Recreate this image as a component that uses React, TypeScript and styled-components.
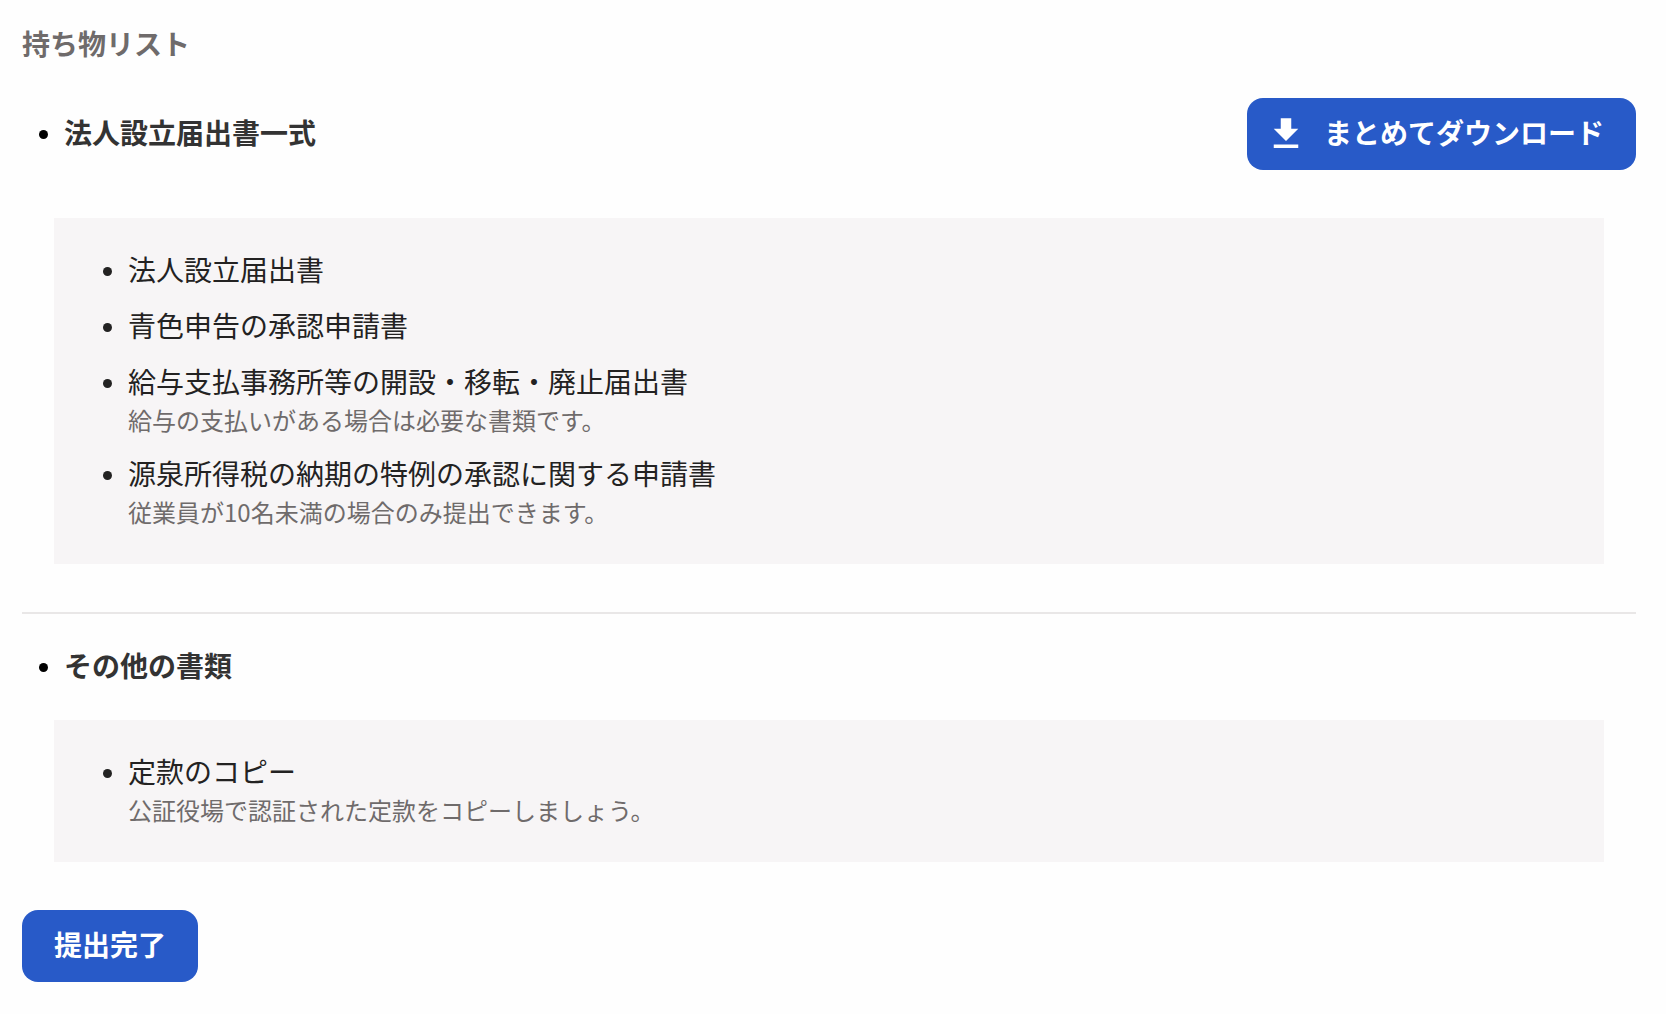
import React from 'react';
import styled, { createGlobalStyle } from 'styled-components';

const color = {
  primary: '#285ac8',
  text: '#232222',
  heading: '#333333',
  muted: '#6f6b6b',
  panel: '#f7f5f6',
  line: '#e9e7e7',
};

const GlobalStyle = createGlobalStyle`
  *, *::before, *::after {
    box-sizing: border-box;
  }
  body {
    margin: 0;
    background: #fefefe;
    color: ${color.text};
    font-family: "Noto Sans CJK JP", sans-serif;
    font-size: 28px;
    line-height: 38px;
  }
`;

const Page = styled.main`
  display: flex;
  flex-direction: column;
  padding: 24px 30px 32px 22px;
`;

const Title = styled.h1`
  margin: 0 0 32px;
  padding-bottom: 4px;
  color: ${color.muted};
  font-size: 28px;
  font-weight: 700;
`;

const Sections = styled.ul`
  margin: 0;
  padding: 0;
  list-style: none;
`;

const Section = styled.li`
  & + & {
    border-top: 2px solid ${color.line};
    padding-top: 32px;
  }
`;

const SectionHeader = styled.div<{ $gap: number }>`
  display: flex;
  align-items: center;
  justify-content: space-between;
  margin-bottom: ${({ $gap }) => $gap}px;
`;

const Bullet = styled.span<{ $color: string }>`
  flex: none;
  width: 9px;
  height: 9px;
  margin: 17px 16px 16px 17px;
  border-radius: 50%;
  background: ${({ $color }) => $color};
`;

const SectionTitle = styled.h2`
  display: flex;
  margin: 0;
  color: ${color.heading};
  font-size: 28px;
  font-weight: 700;
`;

const Panel = styled.ul`
  display: flex;
  flex-direction: column;
  gap: 14px;
  margin: 0 32px 48px;
  padding: 32px;
  background: ${color.panel};
  list-style: none;
`;

const Item = styled.li`
  display: flex;
`;

/* The bottom padding balances the font's tall ascent so glyphs look centred. */
const Label = styled.span`
  display: block;
  padding-bottom: 4px;
`;

const Description = styled.p`
  margin: 0;
  padding-bottom: 4px;
  color: ${color.muted};
  font-size: 24px;
  line-height: 32px;
`;

const Button = styled.button<{ $withIcon?: boolean }>`
  display: inline-flex;
  align-items: center;
  align-self: flex-start;
  gap: 17px;
  height: 72px;
  padding: 0 32px 0 ${({ $withIcon }) => ($withIcon ? 18 : 32)}px;
  border: 0;
  border-radius: 16px;
  background: ${color.primary};
  color: #ffffff;
  font: inherit;
  font-weight: 700;
  white-space: nowrap;
  cursor: pointer;
`;

const Icon = styled.svg`
  flex: none;
  width: 42px;
  height: 42px;
  fill: currentColor;
`;

type Doc = { name: string; note?: string };

const corporateDocs: Doc[] = [
  { name: '法人設立届出書' },
  { name: '青色申告の承認申請書' },
  {
    name: '給与支払事務所等の開設・移転・廃止届出書',
    note: '給与の支払いがある場合は必要な書類です。',
  },
  {
    name: '源泉所得税の納期の特例の承認に関する申請書',
    note: '従業員が10名未満の場合のみ提出できます。',
  },
];

const otherDocs: Doc[] = [
  { name: '定款のコピー', note: '公証役場で認証された定款をコピーしましょう。' },
];

function DocList({ docs }: { docs: Doc[] }) {
  return (
    <Panel>
      {docs.map((doc) => (
        <Item key={doc.name}>
          <Bullet $color={color.text} />
          <div>
            <Label>{doc.name}</Label>
            {doc.note && <Description>{doc.note}</Description>}
          </div>
        </Item>
      ))}
    </Panel>
  );
}

export default function App() {
  return (
    <>
      <GlobalStyle />
      <Page>
        <Title>持ち物リスト</Title>
        <Sections>
          <Section>
            <SectionHeader $gap={48}>
              <SectionTitle>
                <Bullet $color="#000000" />
                <Label>法人設立届出書一式</Label>
              </SectionTitle>
              <Button type="button" $withIcon>
                <Icon viewBox="0 0 24 24" aria-hidden="true">
                  <path d="M19 9h-4V3H9v6H5l7 7 7-7zM5 18v2h14v-2H5z" />
                </Icon>
                <Label>まとめてダウンロード</Label>
              </Button>
            </SectionHeader>
            <DocList docs={corporateDocs} />
          </Section>
          <Section>
            <SectionHeader $gap={32}>
              <SectionTitle>
                <Bullet $color="#000000" />
                <Label>その他の書類</Label>
              </SectionTitle>
            </SectionHeader>
            <DocList docs={otherDocs} />
          </Section>
        </Sections>
        <Button type="button">
          <Label>提出完了</Label>
        </Button>
      </Page>
    </>
  );
}
